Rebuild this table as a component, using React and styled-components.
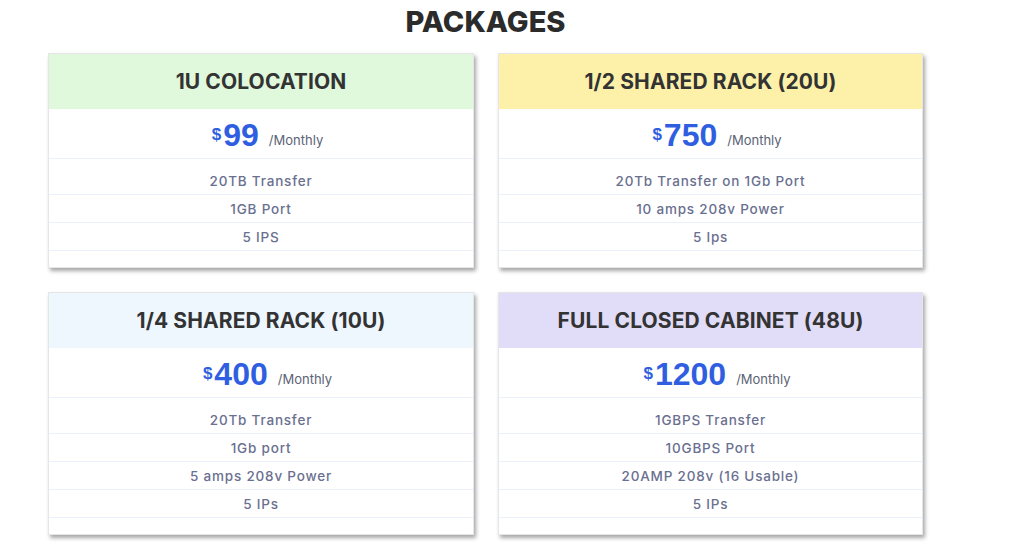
import React from 'react';
import styled, { createGlobalStyle } from 'styled-components';

const GlobalStyle = createGlobalStyle`
  body {
    margin: 0;
    background: #ffffff;
    font-family: "Inter", "Noto Sans", sans-serif;
  }
`;

const Page = styled.div`
  width: 875px;
  padding-left: 48px;
  padding-bottom: 13px;
`;

const Title = styled.h2`
  margin: 0;
  height: 53px;
  padding-top: 4px;
  box-sizing: border-box;
  text-align: center;
  font-family: "Inter", sans-serif;
  font-weight: 800;
  font-size: 29px;
  line-height: 36px;
  color: #2b2b2b;
`;

const Grid = styled.div`
  display: grid;
  grid-template-columns: 426px 425px;
  column-gap: 24px;
  row-gap: 24px;
`;

const Card = styled.div`
  background: #fff;
  border: 1px solid #e6e6e6;
  box-shadow: 2px 3px 4px rgba(0, 0, 0, 0.35);
  padding-bottom: 16px;
`;

const Head = styled.div`
  height: 55px;
  display: flex;
  align-items: center;
  justify-content: center;
  background: ${p => p.bg};
  font-family: "Inter", sans-serif;
  font-weight: 700;
  font-size: 21px;
  color: #333333;
  letter-spacing: 0.1px;
`;

const PriceRow = styled.div`
  height: 50px;
  box-sizing: border-box;
  padding: 3px 0 0 13px;
  display: flex;
  align-items: center;
  justify-content: center;
  border-bottom: 1px solid #eaf1fb;
  font-family: "Liberation Sans", Arial, sans-serif;
  color: #2f5fe0;
`;

const Amount = styled.span`
  font-size: 32px;
  font-weight: 700;
  line-height: 1;
`;

const Dollar = styled.sup`
  font-size: 17px;
  font-weight: 700;
  vertical-align: 14px;
  margin-right: 2px;
`;

const Period = styled.span`
  font-family: "Inter", sans-serif;
  font-size: 13px;
  color: #5b6375;
  margin-left: 10px;
  align-self: flex-end;
  margin-bottom: 10px;
`;

const Features = styled.ul`
  list-style: none;
  margin: 0;
  padding: 8px 0 0;
`;

const Feature = styled.li`
  height: 27px;
  display: flex;
  align-items: center;
  justify-content: center;
  border-bottom: 1px solid #eaf1fb;
  font-family: "Inter", sans-serif;
  font-size: 13.5px;
  font-weight: 500;
  letter-spacing: 0.8px;
  color: #6a7090;
`;

const packages = [
  { name: '1U COLOCATION', bg: '#e0f8dc', price: '99', items: ['20TB Transfer', '1GB Port', '5 IPS'] },
  { name: '1/2 SHARED RACK (20U)', bg: '#fdf1a9', price: '750', items: ['20Tb Transfer on 1Gb Port', '10 amps 208v Power', '5 Ips'] },
  { name: '1/4 SHARED RACK (10U)', bg: '#eef6fe', price: '400', items: ['20Tb Transfer', '1Gb port', '5 amps 208v Power', '5 IPs'] },
  { name: 'FULL CLOSED CABINET (48U)', bg: '#e1dcf7', price: '1200', items: ['1GBPS Transfer', '10GBPS Port', '20AMP 208v (16 Usable)', '5 IPs'] },
];

export default function App() {
  return (
    <Page>
      <GlobalStyle />
      <Title>PACKAGES</Title>
      <Grid>
        {packages.map(p => (
          <Card key={p.name}>
            <Head bg={p.bg}>{p.name}</Head>
            <PriceRow>
              <Dollar>$</Dollar>
              <Amount>{p.price}</Amount>
              <Period>/Monthly</Period>
            </PriceRow>
            <Features>
              {p.items.map(i => <Feature key={i}>{i}</Feature>)}
            </Features>
          </Card>
        ))}
      </Grid>
    </Page>
  );
}
